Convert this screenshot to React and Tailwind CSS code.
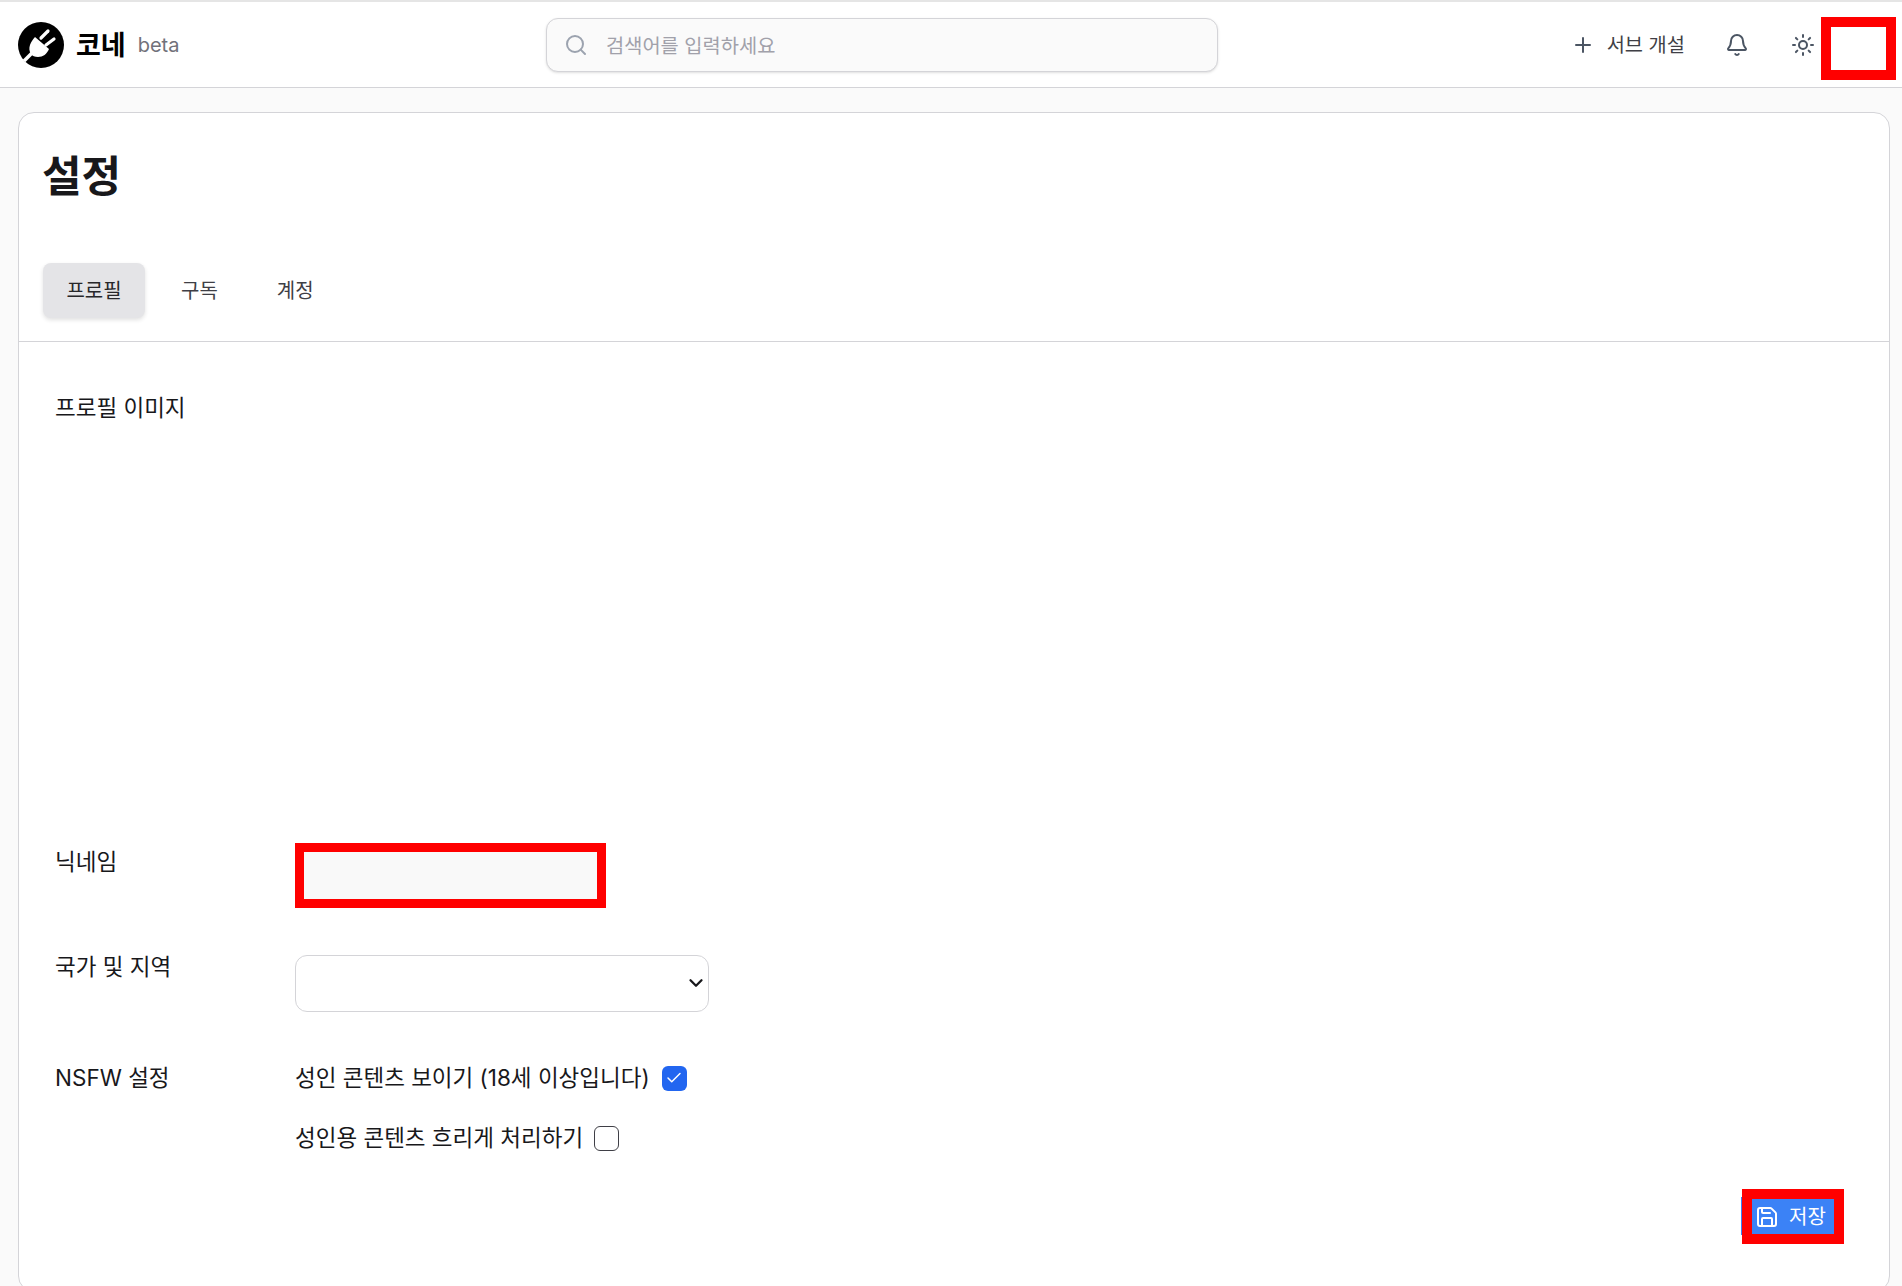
import React from 'react';
import { Search, Plus, Bell, Sun, Save, Check, ChevronDown } from 'lucide-react';

const FONT = "font-['Inter','Noto_Sans_CJK_KR',sans-serif]";

const Logo = () => (
  <svg viewBox="0 0 46 46" className="w-[46px] h-[46px] shrink-0">
    <circle cx="23" cy="23" r="23" fill="#000" />
    <g fill="none" stroke="#fff" strokeLinecap="round">
      <path d="M23 16 L30 9" strokeWidth="3.2" />
      <path d="M28 23 L36 17" strokeWidth="3.2" />
    </g>
    <path d="M17 15 L31 27 C29 32 25 35 20 35 C17 35 14 34 13 32 C11 29 11 26 12 23 C13 20 15 17 17 15 Z" fill="#fff" />
    <path d="M14 31 L6 39" stroke="#fff" strokeWidth="3.5" fill="none" />
  </svg>
);

const Row = ({ label, labelClass = '', className = '', children }) => (
  <div className={`flex ${className}`}>
    <div className={`w-[240px] shrink-0 text-[22.5px] leading-[30px] text-[#18181b] ${labelClass}`}>{label}</div>
    {children}
  </div>
);

export default function App() {
  return (
    <div className={`${FONT} h-[1286px] overflow-hidden bg-[#fafafa]`}>
      {/* HEADER */}
      <header className="h-[88px] bg-white border-t-2 border-b border-t-[#e5e5e5] border-b-[#d4d4d8] flex items-center pl-[18px] pr-[6px]">
        <div className="w-[528px] flex items-center">
          <Logo />
          <span className="ml-3 text-[27px] leading-[36px] pt-[3px] font-bold text-black">코네</span>
          <span className="ml-[12px] pt-[1px] text-[20px] text-[#71717a]">beta</span>
        </div>
        <div className="w-[672px] h-[54px] rounded-xl border border-[#d4d4d8] bg-[#fafafa] shadow-sm flex items-center pl-[17px]">
          <Search className="w-[24px] h-[24px] text-[#9ca3af]" strokeWidth={2} />
          <span className="ml-[18px] pt-[4px] text-[19.8px] text-[#a1a1aa]">검색어를 입력하세요</span>
        </div>
        <div className="flex-1 flex items-center justify-end text-[#3f3f46]">
          <Plus className="w-[24px] h-[24px] text-[#4b5563]" strokeWidth={2} />
          <span className="ml-[12px] pt-[3px] text-[19.8px]">서브 개설</span>
          <Bell className="ml-[40px] w-[24px] h-[24px] text-[#4b5563]" strokeWidth={2} />
          <Sun className="ml-[42px] w-[24px] h-[24px] text-[#4b5563]" strokeWidth={2} />
          <div className="ml-[6px] mt-[7px] w-[75px] h-[63px] border-[10px] border-[#ff0000] bg-white" />
        </div>
      </header>

      {/* CARD */}
      <main className="pt-[24px] pl-[18px] pr-[12px]">
        <div className="h-[1180px] rounded-2xl border border-[#d4d4d8] bg-white">
          <div className="px-[24px] pt-[35px] pb-[23px] border-b border-[#d4d4d8]">
            <h1 className="-ml-[1px] text-[43px] leading-[56px] font-bold text-[#18181b]">설정</h1>
            <div className="mt-[59px] flex items-center text-[20px] text-[#3f3f46]">
              <div className="w-[102px] h-[55px] rounded-lg bg-[#e4e4e7] shadow-[0_2px_4px_rgba(0,0,0,0.12)] flex items-center justify-center text-[#27272a]">프로필</div>
              <div className="ml-[36px]">구독</div>
              <div className="ml-[59px]">계정</div>
            </div>
          </div>

          <div className="px-[36px] pt-[51px]">
            <div className="h-[450px] text-[22.5px] leading-[30px] text-[#18181b]">프로필 이미지</div>

            <Row label="닉네임" labelClass="pt-[4px]" className="h-[112px]">
              <div className="w-[311px] h-[65px] border-[9px] border-[#ff0000] bg-[#f9f9f9]" />
            </Row>

            <Row label="국가 및 지역" labelClass="-mt-[3px]" className="h-[108px]">
              <div className="relative w-[414px] h-[57px]">
                <select className="appearance-none w-full h-full rounded-xl border border-[#d4d4d8] bg-white">
                  <option></option>
                </select>
                <ChevronDown className="absolute right-[2px] top-[17px] w-[22px] h-[22px] text-[#18181b]" strokeWidth={2.5} />
              </div>
            </Row>

            <Row label="NSFW 설정">
              <div className="flex flex-col gap-[30px] text-[22.5px] leading-[30px] text-[#18181b]">
                <div className="flex items-center">
                  성인 콘텐츠 보이기 (18세 이상입니다)
                  <span className="ml-[12px] w-[25px] h-[25px] rounded-md bg-[#2266f0] flex items-center justify-center">
                    <Check className="w-[18px] h-[18px] text-white" strokeWidth={2} />
                  </span>
                </div>
                <div className="flex items-center">
                  성인용 콘텐츠 흐리게 처리하기
                  <span className="ml-[11px] w-[25px] h-[25px] rounded-md border border-[#3f3f46] bg-white" />
                </div>
              </div>
            </Row>

            <div className="flex justify-end mt-[36px] pr-[9px]">
              <button className="relative w-[102px] h-[55px] border-[10px] border-[#ff0000] bg-[#3b82f6] text-white text-[20px] flex items-center pl-[3px] gap-[10px]">
                <span className="absolute -left-[11px] top-[-2px] w-[1px] h-[38px] bg-[#3b82f6]" />
                <Save className="w-[24px] h-[24px]" strokeWidth={2} />
                저장
              </button>
            </div>
          </div>
        </div>
      </main>
    </div>
  );
}
